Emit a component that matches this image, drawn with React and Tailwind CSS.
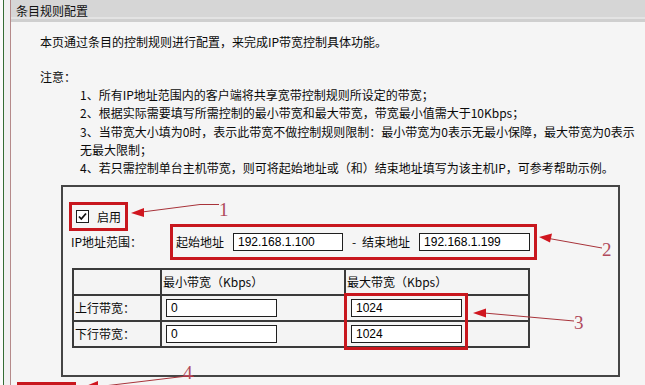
const cjk = { fontFamily: '"Noto Sans CJK SC", "Noto Sans", sans-serif' };

function Field({ value, width = 'w-[110px]' }) {
  return (
    <div
      className={`${width} h-[18px] border border-[#1f1f1f] bg-white pl-[4px] flex items-center text-[12px] text-[#000]`}
      style={{ fontFamily: '"Liberation Sans", Arial, sans-serif' }}
    >
      {value}
    </div>
  );
}

function Notes() {
  return (
    <div className="pl-[40px] leading-[18.3px] whitespace-nowrap">
      <div>1、所有IP地址范围内的客户端将共享宽带控制规则所设定的带宽；</div>
      <div>2、根据实际需要填写所需控制的最小带宽和最大带宽，带宽最小值需大于10Kbps；</div>
      <div>3、当带宽大小填为0时，表示此带宽不做控制规则限制：最小带宽为0表示无最小保障，最大带宽为0表示</div>
      <div>无最大限制；</div>
      <div>4、若只需控制单台主机带宽，则可将起始地址或（和）结束地址填写为该主机IP，可参考帮助示例。</div>
    </div>
  );
}

function BandwidthTable() {
  const rows = [
    { label: '上行带宽：', min: '0', max: '1024' },
    { label: '下行带宽：', min: '0', max: '1024' },
  ];
  return (
    <div className="relative ml-[9px] mt-[11px] w-[458px]">
      <div className="grid grid-cols-[86px_182px_182px] grid-rows-[24px_24px_24px] gap-[2px] border-2 border-[#3a3a3a] bg-[#3a3a3a]">
        <div className="bg-[#f4f4f4]" />
        <div className="bg-[#f4f4f4] pl-[1px] flex items-center">最小带宽（Kbps）</div>
        <div className="bg-[#f4f4f4] pl-[1px] flex items-center">最大带宽（Kbps）</div>
        {rows.map((r) => (
          <>
            <div key={r.label} className="bg-[#f4f4f4] pl-[1px] flex items-center">{r.label}</div>
            <div className="bg-[#f4f4f4] pl-[4px] flex items-center">
              <Field value={r.min} width="w-[111px]" />
            </div>
            <div className="bg-[#f4f4f4] pl-[5px] flex items-center">
              <Field value={r.max} width="w-[111px]" />
            </div>
          </>
        ))}
      </div>
      <div className="absolute left-[272px] top-[25px] w-[124px] h-[57px] border-[3px] border-[#c8171e]" />
    </div>
  );
}

function Annotations() {
  const line = '#a8333a';
  const head = '#d0161f';
  const label = { fontFamily: '"Liberation Serif", serif', fontSize: 19, fill: '#b04a5c' };
  return (
    <svg className="absolute left-0 top-0 pointer-events-none" width="645" height="385" viewBox="0 0 645 385">
      {/* 1 */}
      <polyline points="219,204.5 200,204.5 142,212" fill="none" stroke={line} strokeWidth="1" />
      <polygon points="131,213 144,208 144,217" fill={head} />
      <text x="219" y="216" style={label}>1</text>
      {/* 2 */}
      <polyline points="549,238.5 602,248" fill="none" stroke={line} strokeWidth="1" />
      <polygon points="539,237 552,233.5 550,242.5" fill={head} />
      <text x="602" y="256" style={label}>2</text>
      {/* 3 */}
      <polyline points="484,313 574,321" fill="none" stroke={line} strokeWidth="1" />
      <polygon points="473,313 486,308.5 486,317.5" fill={head} />
      <text x="574" y="329" style={label}>3</text>
      {/* 4 */}
      <polyline points="194,376.5 183,376.5 104,386" fill="none" stroke={line} strokeWidth="1" />
      <polygon points="86,386 98,381 98,390" fill={head} />
      <text x="183" y="379" style={label}>4</text>
      <rect x="18.5" y="383.5" width="56" height="20" fill="none" stroke="#c8171e" strokeWidth="3" />
    </svg>
  );
}

export default function App() {
  return (
    <div
      className="relative w-[645px] h-[385px] overflow-hidden bg-white flex text-[12px] text-[#0a0a0a]"
      style={cjk}
    >
      <div className="w-[3px] bg-[#fbfbfb]" />
      <div className="w-[7px] border-l border-[#356d35] bg-[#f1f1f1]" />
      <div className="flex-1 border-l border-[#b58a8a] bg-[#f5f5f5] flex flex-col">
        <div className="h-[22px] bg-[#d6d6d6] pl-[5px] leading-[22px] text-[12px] text-[#111] shadow-[inset_0_-3px_0_#cfcfcf,inset_0_-5px_0_#e3e3e3]">
          条目规则配置
        </div>

        <div className="pl-[29px] pt-[11px] leading-[18px]">
          <div className="whitespace-nowrap">本页通过条目的控制规则进行配置，来完成IP带宽控制具体功能。</div>
          <div className="mt-[17px]">注意：</div>
          <Notes />

          <div className="ml-[21px] mt-[8px] w-[559px] h-[192px] border-2 border-[#454545]">
            <div className="ml-[9px] mt-[18px] inline-flex h-[23px] items-center pl-[4px] pr-[4px] gap-[8px] outline-[3px] outline-solid outline-[#c8171e]">
              <span className="w-[13px] h-[13px] border border-[#1c1c1c] bg-white flex items-center justify-center">
                <svg width="11" height="11" viewBox="0 0 11 11">
                  <path d="M2 5.5 L4.3 8 L9 2.5" fill="none" stroke="#111" strokeWidth="1.8" />
                </svg>
              </span>
              <span>启用</span>
            </div>

            <div className="ml-[8px] -mt-[1px] flex h-[30px] items-center">
              <div className="w-[102px] whitespace-nowrap">IP地址范围：</div>
              <div className="flex h-full items-center pl-[3px] pr-[4px] outline-[3px] outline-solid outline-[#c8171e]">
                <span className="whitespace-nowrap">起始地址</span>
                <div className="ml-[9px]">
                  <Field value="192.168.1.100" />
                </div>
                <span className="ml-[9px] w-[4px]">-</span>
                <span className="ml-[6px] whitespace-nowrap">结束地址</span>
                <div className="ml-[9px]">
                  <Field value="192.168.1.199" width="w-[111px]" />
                </div>
              </div>
            </div>

            <BandwidthTable />
          </div>
        </div>
      </div>
      <Annotations />
    </div>
  );
}
